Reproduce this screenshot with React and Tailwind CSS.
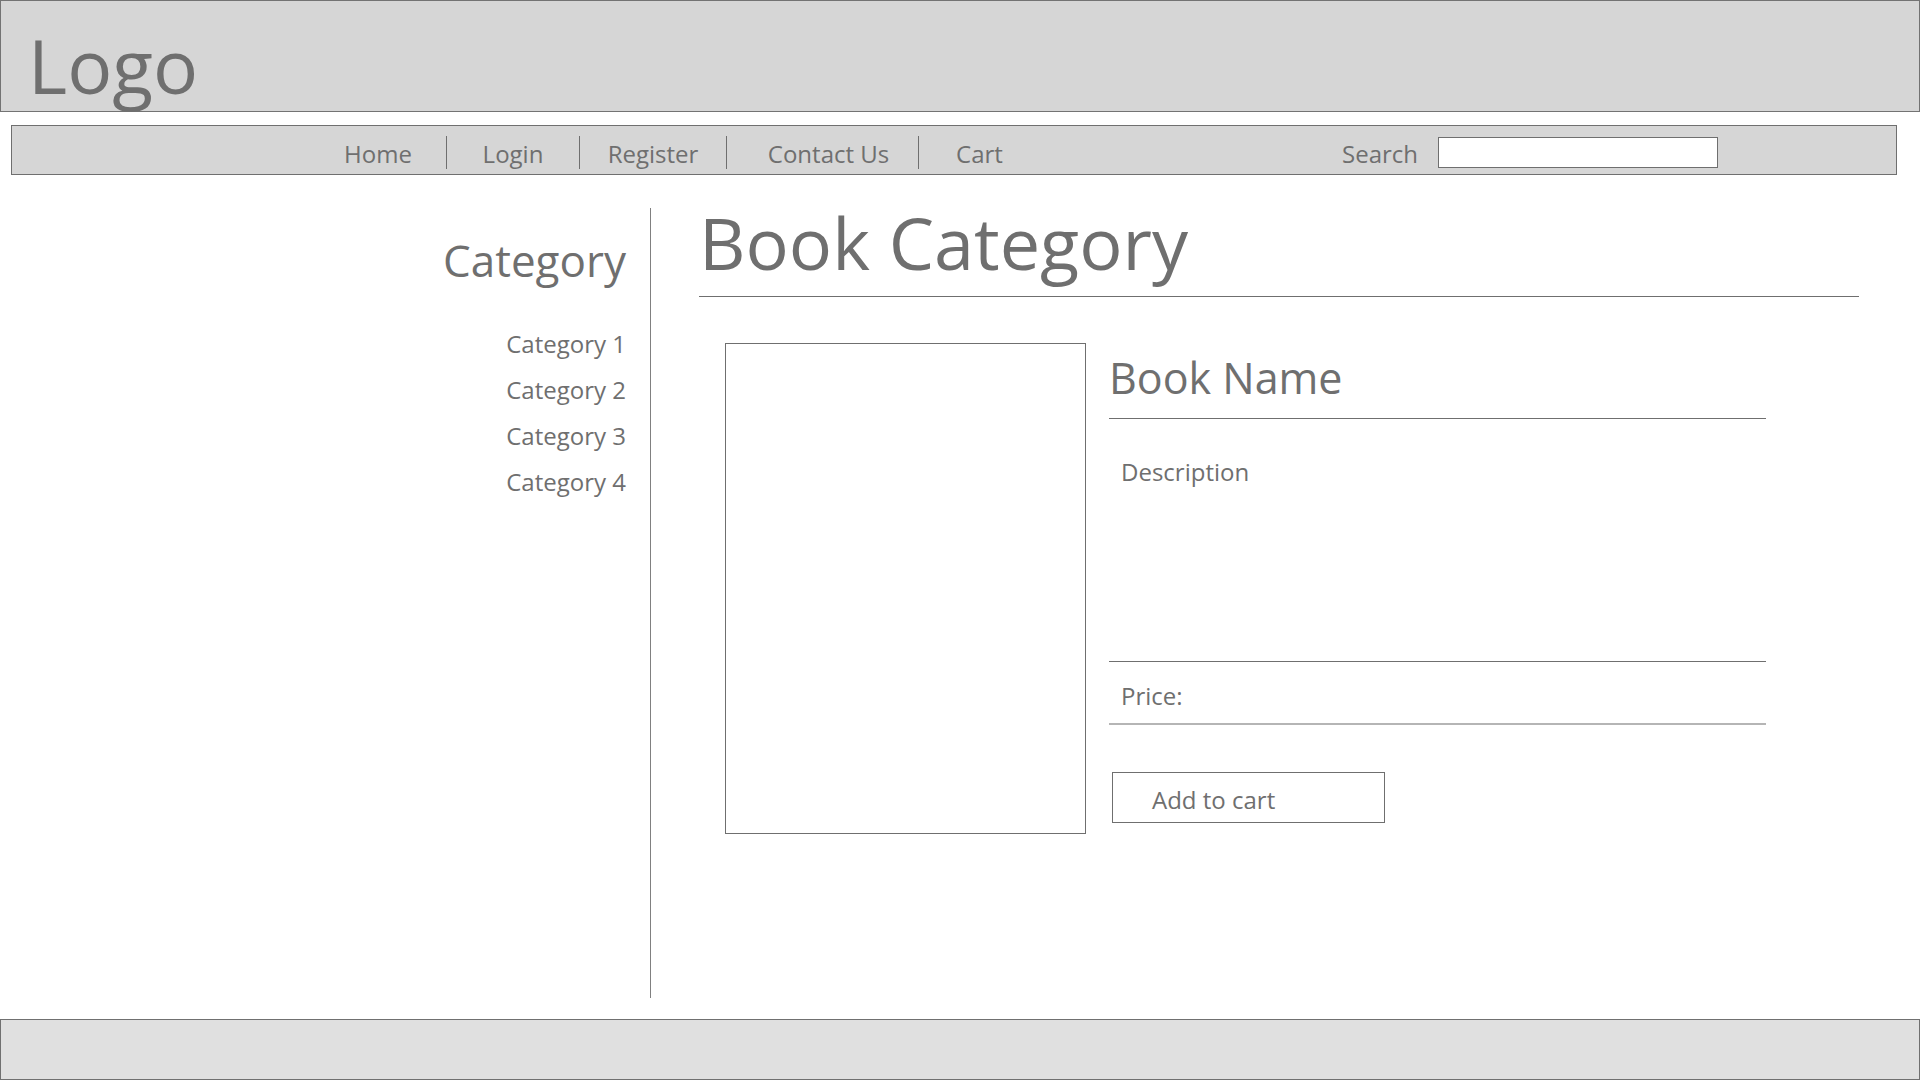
const navLinks = [
    { label: "Home", cell: "w-[136px]" },
    { label: "Login", cell: "w-[132px]" },
    { label: "Register", cell: "w-[146px]" },
    { label: "Contact Us", cell: "w-[191px] pl-[12px]" },
    { label: "Cart", cell: "w-[121px]" },
];

const categories = ["Category 1", "Category 2", "Category 3", "Category 4"];

const App = () => {
    return (
        <div className="flex h-[1080px] w-[1920px] flex-col overflow-hidden bg-white font-['Open_Sans',sans-serif] text-[#6f6f6f]">
            {/* Header */}
            <header className="h-[112px] shrink-0 border border-[#737373] bg-[#d6d6d6] pl-[27px] pt-[27px]">
                <div className="text-[75px] leading-none">Logo</div>
            </header>

            {/* Nav bar */}
            <nav className="ml-[11px] mt-[13px] flex h-[50px] w-[1886px] shrink-0 items-center border border-[#6f6f6f] bg-[#d6d6d6] pl-[298px] pr-[178px] pt-[4px] text-[24px] leading-none">
                {navLinks.map((link, index) => (
                    <div key={link.label} className="flex items-center">
                        {index > 0 && <span className="h-[33px] w-px bg-[#6f6f6f]" />}
                        <a href="#" className={`${link.cell} pt-[3px] text-center`}>
                            {link.label}
                        </a>
                    </div>
                ))}
                <div className="ml-auto flex items-center gap-[20px]">
                    <span className="pt-[3px]">Search</span>
                    <input type="text" className="h-[31px] w-[280px] border border-[#6f6f6f] bg-white outline-none" />
                </div>
            </nav>

            {/* Body */}
            <div className="mt-[25px] flex h-[798px] shrink-0">
                <aside className="mt-[8px] w-[651px] shrink-0 border-r border-[#808080] pr-[24px] pt-[30px] text-right">
                    <h2 className="text-[44px] leading-none">Category</h2>
                    <ul className="mt-[39px] text-[24px] leading-[46px]">
                        {categories.map((c) => (
                            <li key={c}>{c}</li>
                        ))}
                    </ul>
                </aside>

                <main className="flex-1 pl-[48px]">
                    <h1 className="w-[1160px] border-b border-[#6f6f6f] pb-[18px] pt-[6px] text-[72px] leading-none">
                        Book Category
                    </h1>

                    <div className="ml-[26px] mt-[46px] flex gap-[23px]">
                        <div className="h-[491px] w-[361px] border border-[#6f6f6f]" />

                        <div className="w-[657px]">
                            <h3 className="border-b border-[#6f6f6f] pb-[19px] pt-[13px] text-[43px] leading-none">Book Name</h3>
                            <div className="h-[243px] border-b border-[#6f6f6f] pl-[12px] pt-[41px] text-[24px] leading-none">
                                Description
                            </div>
                            <div className="border-b-2 border-[#b5b5b5] pb-[15px] pl-[12px] pt-[22px] text-[24px] leading-none">
                                Price:
                            </div>
                            <button className="ml-[3px] mt-[47px] h-[51px] w-[273px] border border-[#6f6f6f] bg-white pl-[39px] pt-[4px] text-left text-[24px] leading-none">
                                Add to cart
                            </button>
                        </div>
                    </div>
                </main>
            </div>

            {/* Footer */}
            <footer className="mt-[21px] h-[61px] shrink-0 border border-[#707070] bg-[#e0e0e0]" />
        </div>
    );
};

export default App;
